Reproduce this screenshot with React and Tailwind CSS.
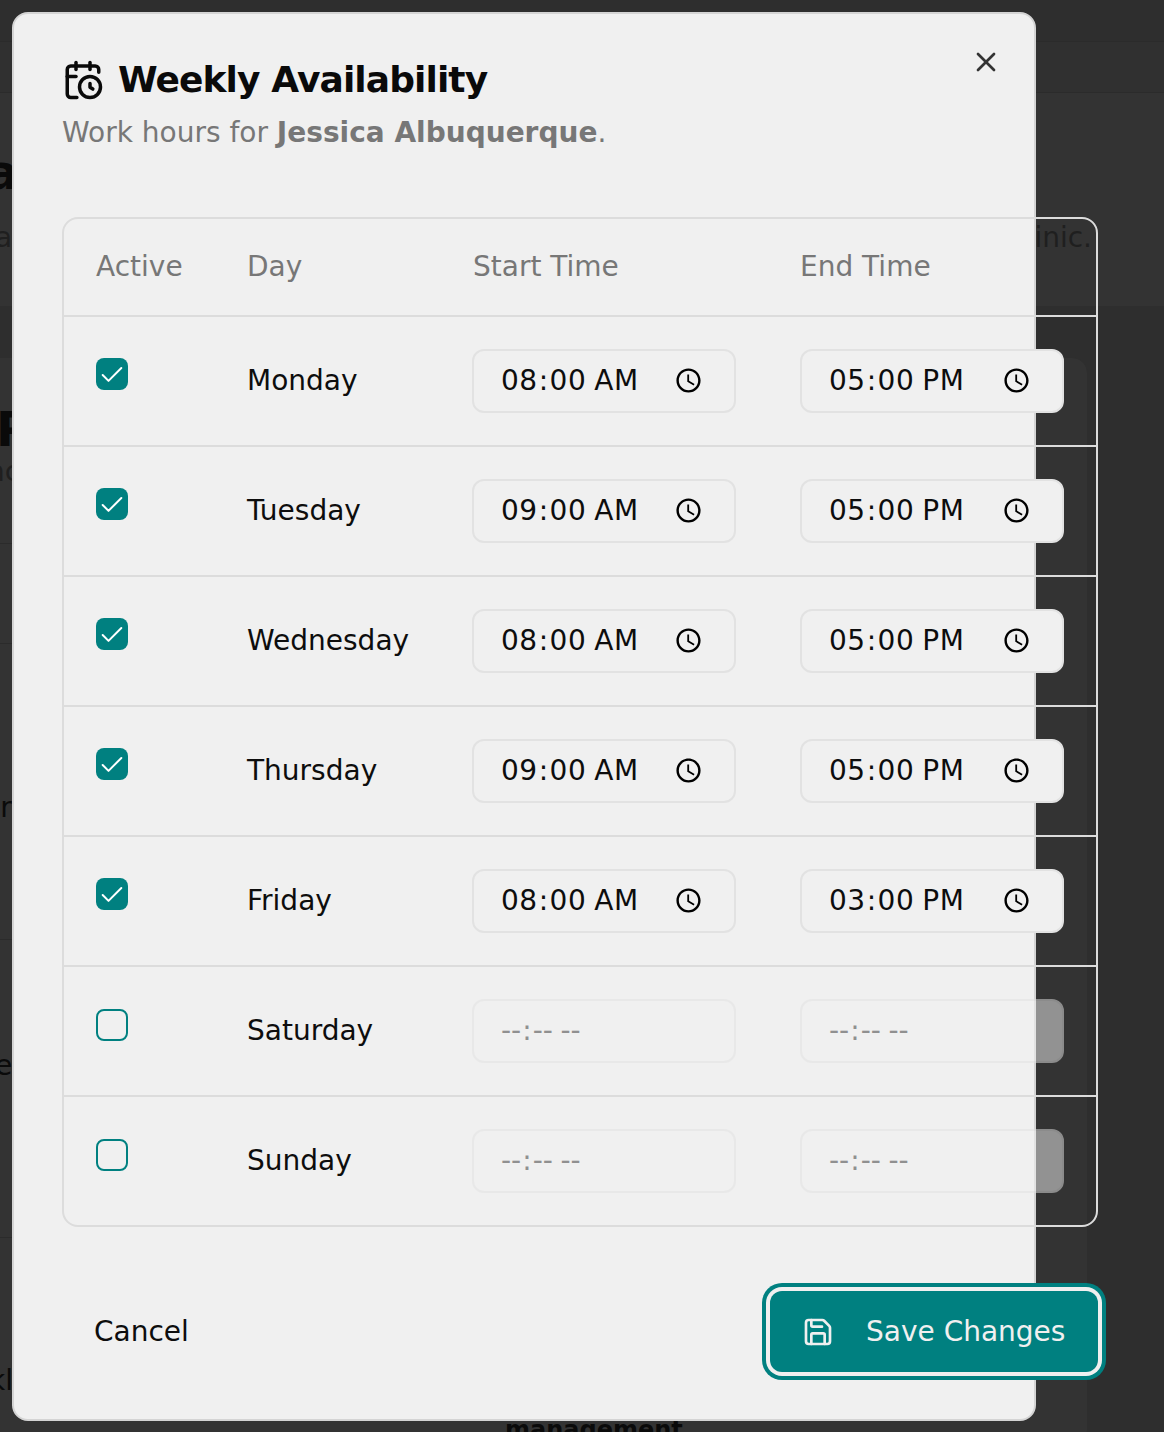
import { CalendarClock, Check, Save, X } from 'lucide-react';

const days = [
  { name: 'Monday', active: true, start: '08:00', end: '17:00' },
  { name: 'Tuesday', active: true, start: '09:00', end: '17:00' },
  { name: 'Wednesday', active: true, start: '08:00', end: '17:00' },
  { name: 'Thursday', active: true, start: '09:00', end: '17:00' },
  { name: 'Friday', active: true, start: '08:00', end: '15:00' },
  { name: 'Saturday', active: false, start: '', end: '' },
  { name: 'Sunday', active: false, start: '', end: '' },
];

function TimeField({ value, disabled }) {
  return (
    <input
      type="time"
      defaultValue={value}
      disabled={disabled}
      className="w-[264px] h-[64px] pl-[26px] pr-[28px] rounded-[12px] border-2 border-[#e2e2e2] bg-[#f0f0f0] text-[28px] tracking-[0.5px] text-[#0d0d0d] disabled:opacity-50 disabled:text-[#333333]"
    />
  );
}

// the page behind the dialog, only its edges show
function Background() {
  return (
    <div className="h-full flex flex-col overflow-hidden bg-[#2e2e2e] text-[#0a0a0a]">
      <div className="h-[42px] shrink-0 border-b border-[#2b2b2b]" />
      <div className="h-[51px] shrink-0 bg-[#303030] border-b border-[#2b2b2b]" />
      <div className="h-[213px] shrink-0 bg-[#333333] pt-[55px]">
        <div className="text-[48px] leading-[48px] font-bold -ml-[14px]">a</div>
        <div className="flex justify-between pr-[72px] mt-[22px] text-[28px] leading-[40px] text-[#1f1f1f]">
          <span className="-ml-[5px]">a</span>
          <span>Clinic.</span>
        </div>
      </div>
      <div className="h-[51px] shrink-0" />
      <div className="flex-1 flex flex-col -ml-[20px] mr-[76px] pl-[20px] rounded-[16px] border border-[#2e2e2e] bg-[#333333]">
        <div className="h-[185px] shrink-0 pt-[47px]">
          <div className="text-[48px] leading-[48px] font-bold -ml-[5px]">P</div>
          <div className="-mt-[1px] text-[28px] leading-[40px] text-[#1f1f1f] -ml-[14px]">nc</div>
        </div>
        <div className="h-[100px] shrink-0 border-t border-[#2b2b2b] -ml-[20px] mr-[60px]" />
        <div className="h-[296px] shrink-0 border-t border-[#2b2b2b] pt-[144px] -ml-[20px] pl-[20px] mr-[60px]">
          <div className="text-[28px] leading-[40px] -ml-[18px]">er</div>
        </div>
        <div className="h-[298px] shrink-0 border-t border-[#2b2b2b] pt-[106px] -ml-[20px] pl-[20px] mr-[60px]">
          <div className="text-[28px] leading-[40px] -ml-[6px]">e</div>
        </div>
        <div className="flex-1 border-t border-[#2b2b2b] pt-[123px] -ml-[20px] pl-[20px] mr-[60px]">
          <div className="text-[28px] leading-[40px] -ml-[12px]">kl</div>
          <div className="mt-[14px] ml-[504px] text-[24px] leading-[30px] font-bold">management</div>
        </div>
      </div>
    </div>
  );
}

export default function App() {
  return (
    <div className="relative w-[1164px] h-[1432px] overflow-hidden font-['DejaVu_Sans',sans-serif]">
      <Background />

      <div className="absolute left-[12px] top-[12px] w-[1024px] h-[1409px] flex flex-col bg-[#f0f0f0] border-2 border-[#d4d4d4] rounded-[16px] pt-[44px] px-[48px]">
        <button className="absolute right-[32px] top-[32px] text-[#333333]">
          <X size={32} strokeWidth={2} />
        </button>

        <div className="flex items-center gap-[14px] text-[#0a0a0a]">
          <CalendarClock size={42} strokeWidth={2} />
          <h2 className="text-[36px] leading-[44px] font-bold tracking-tight">Weekly Availability</h2>
        </div>
        <p className="mt-[11px] text-[28px] leading-[40px] text-[#777777]">
          Work hours for <strong className="font-bold">Jessica Albuquerque</strong>.
        </p>

        <div className="mt-[64px] w-[1036px] rounded-[16px] border-2 border-[#dcdcdc]">
          <div className="grid grid-cols-[151px_225px_328px_328px] h-[96px] items-center text-[28px] text-[#777777]">
            <div className="pl-[32px]">Active</div>
            <div className="pl-[32px]">Day</div>
            <div className="pl-[33px]">Start Time</div>
            <div className="pl-[32px]">End Time</div>
          </div>
          {days.map((d) => (
            <div
              key={d.name}
              className="grid grid-cols-[151px_225px_328px_328px] h-[130px] items-center border-t-2 border-[#dcdcdc] text-[28px] text-[#0d0d0d]"
            >
              <div className="pl-[32px] pb-[14px]">
                {d.active ? (
                  <div className="w-[32px] h-[32px] rounded-[8px] bg-[#008080] flex items-center justify-center text-white">
                    <Check size={28} strokeWidth={1.7} className="mt-[2px]" />
                  </div>
                ) : (
                  <div className="w-[32px] h-[32px] mt-[2px] rounded-[8px] border-2 border-[#008080]" />
                )}
              </div>
              <div className="pl-[32px]">{d.name}</div>
              <div className="pl-[32px]"><TimeField value={d.start} disabled={!d.active} /></div>
              <div className="pl-[32px]"><TimeField value={d.end} disabled={!d.active} /></div>
            </div>
          ))}
        </div>

        <div className="mt-[64px] w-[1036px] flex items-center justify-between">
          <button className="px-[32px] h-[81px] text-[28px] text-[#0d0d0d]">Cancel</button>
          <button className="flex items-center gap-[32px] h-[81px] w-[328px] pl-[32px] rounded-[12px] bg-[#008080] text-[28px] text-[#f0f0f0] shadow-[0_0_0_4px_#f0f0f0,0_0_0_8px_#008080]">
            <Save size={32} strokeWidth={2} />
            Save Changes
          </button>
        </div>
      </div>
    </div>
  );
}
